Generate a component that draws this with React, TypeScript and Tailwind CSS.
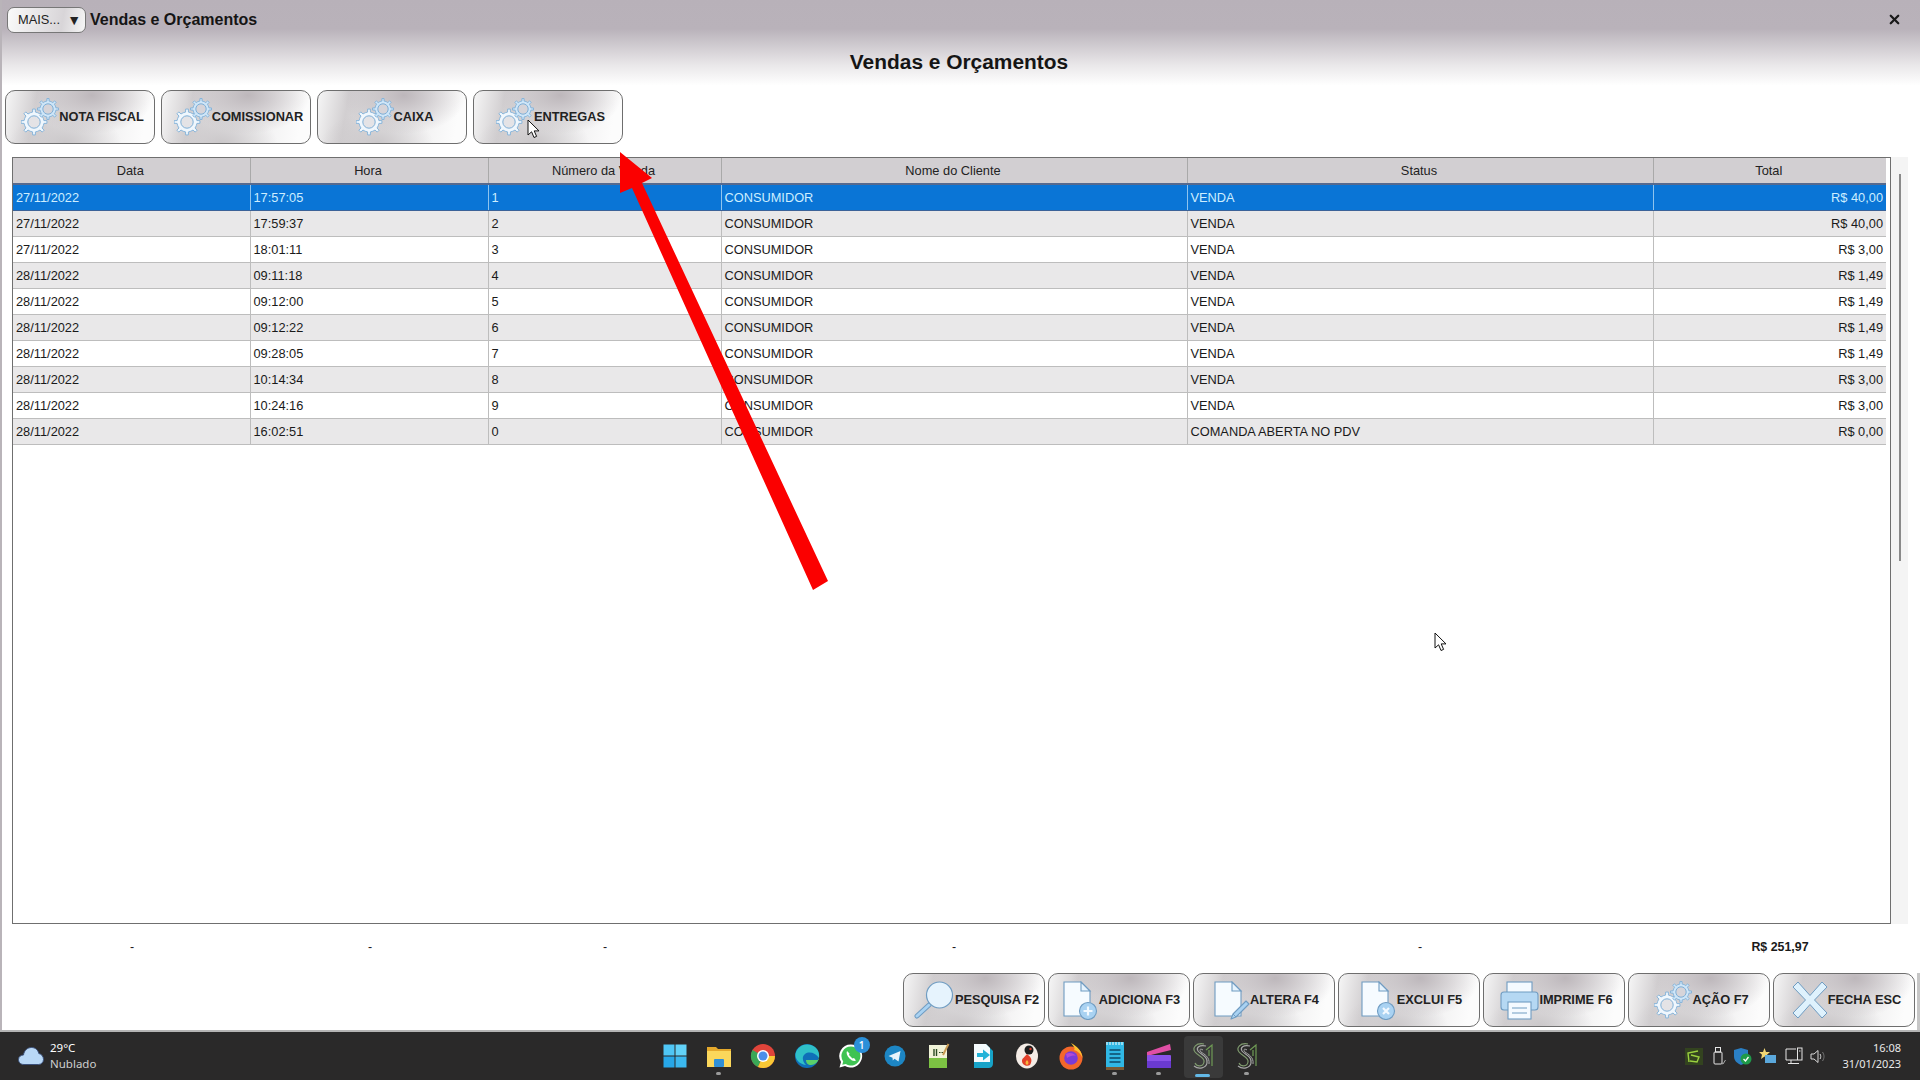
import type { ReactNode } from 'react'
import { X } from 'lucide-react'

const rows = [
  ['27/11/2022', '17:57:05', '1', 'CONSUMIDOR', 'VENDA', 'R$ 40,00'],
  ['27/11/2022', '17:59:37', '2', 'CONSUMIDOR', 'VENDA', 'R$ 40,00'],
  ['27/11/2022', '18:01:11', '3', 'CONSUMIDOR', 'VENDA', 'R$ 3,00'],
  ['28/11/2022', '09:11:18', '4', 'CONSUMIDOR', 'VENDA', 'R$ 1,49'],
  ['28/11/2022', '09:12:00', '5', 'CONSUMIDOR', 'VENDA', 'R$ 1,49'],
  ['28/11/2022', '09:12:22', '6', 'CONSUMIDOR', 'VENDA', 'R$ 1,49'],
  ['28/11/2022', '09:28:05', '7', 'CONSUMIDOR', 'VENDA', 'R$ 1,49'],
  ['28/11/2022', '10:14:34', '8', 'CONSUMIDOR', 'VENDA', 'R$ 3,00'],
  ['28/11/2022', '10:24:16', '9', 'CONSUMIDOR', 'VENDA', 'R$ 3,00'],
  ['28/11/2022', '16:02:51', '0', 'CONSUMIDOR', 'COMANDA ABERTA NO PDV', 'R$ 0,00'],
]

const columns = ['Data', 'Hora', 'Número da Venda', 'Nome do Cliente', 'Status', 'Total']
const colWidths = ['w-[237px]', 'w-[238px]', 'w-[233px]', 'w-[466px]', 'w-[466px]', 'w-[233px]']

const LINE = '#6f9cc2'
const PALE = '#e6f3fd'
const MID = '#a9d2f2'

// gear outline with square teeth
function gearPath(cx: number, cy: number, outer: number, root: number, teeth: number) {
  const pts: string[] = []
  for (let i = 0; i < teeth; i++) {
    const a = (i * 2 * Math.PI) / teeth
    const s = Math.PI / teeth
    const corners = [
      [a - s * 0.95, root],
      [a - s * 0.36, root],
      [a - s * 0.26, outer],
      [a + s * 0.26, outer],
      [a + s * 0.36, root],
      [a + s * 0.95, root],
    ]
    for (const [an, r] of corners) {
      pts.push(`${(cx + r * Math.sin(an)).toFixed(2)} ${(cy - r * Math.cos(an)).toFixed(2)}`)
    }
  }
  return `M${pts.join('L')}Z`
}

function GearsIcon() {
  return (
    <svg width="38" height="38" viewBox="0 0 38 38" className="shrink-0">
      <path d={gearPath(13, 24, 13, 10, 8)} fill="#f0f7fd" stroke="#7fb0d8" strokeWidth="0.9" strokeLinejoin="round" />
      <circle cx="13" cy="24" r="6.2" fill="#e4e3e6" stroke="#7fb0d8" strokeWidth="1" />
      <path d={gearPath(27, 11, 10.5, 8, 8)} fill="#cfe6f8" stroke="#7fb0d8" strokeWidth="0.9" strokeLinejoin="round" />
      <circle cx="27" cy="11" r="5.2" fill="#d6d4d9" stroke="#7fb0d8" strokeWidth="1" />
    </svg>
  )
}

function SearchIcon() {
  return (
    <svg width="41" height="39" viewBox="0 0 41 39" className="shrink-0">
      <path d="M15 24 L3 35" stroke={LINE} strokeWidth="5" strokeLinecap="round" />
      <path d="M15 24 L3 35" stroke="#a9d2f2" strokeWidth="3" strokeLinecap="round" />
      <circle cx="25.5" cy="14" r="13" fill={PALE} stroke={LINE} strokeWidth="1.2" />
    </svg>
  )
}

function DocBase({ children }: { children?: ReactNode }) {
  return (
    <svg width="36" height="39" viewBox="0 0 36 39" className="shrink-0">
      <path d="M1 1 H18 L27 10 V35 H1 Z" fill="#f6fbff" stroke={LINE} strokeWidth="1.1" />
      <path d="M18 1 V10 H27 Z" fill={PALE} stroke={LINE} strokeWidth="1.1" />
      {children}
    </svg>
  )
}

function AddDocIcon() {
  return (
    <DocBase>
      <circle cx="25" cy="30" r="8.5" fill={MID} stroke={LINE} strokeWidth="1.1" />
      <path d="M25 25.5 V34.5 M20.5 30 H29.5" stroke="#f2f9ff" strokeWidth="2.2" />
    </DocBase>
  )
}

function DelDocIcon() {
  return (
    <DocBase>
      <circle cx="25" cy="30" r="8.5" fill={MID} stroke={LINE} strokeWidth="1.1" />
      <path d="M22 27 L28 33 M28 27 L22 33" stroke="#f2f9ff" strokeWidth="2.2" />
    </DocBase>
  )
}

function EditDocIcon() {
  return (
    <DocBase>
      <path d="M32 20 L35 23 L22 36 L17 38 L19 33 Z" fill={MID} stroke={LINE} strokeWidth="1.1" strokeLinejoin="round" />
      <path d="M19 33 L22 36" stroke={LINE} strokeWidth="1" />
    </DocBase>
  )
}

function PrinterIcon() {
  return (
    <svg width="39" height="39" viewBox="0 0 39 39" className="shrink-0">
      <rect x="7" y="1" width="25" height="18" fill="#f4faff" stroke={LINE} strokeWidth="1.1" />
      <rect x="1" y="11" width="37" height="18" rx="3" fill="#b5d8f3" stroke={LINE} strokeWidth="1.1" />
      <rect x="8" y="21" width="23" height="17" fill="#f4faff" stroke={LINE} strokeWidth="1.1" />
      <path d="M12 27 H27 M12 32 H27" stroke={LINE} strokeWidth="1.1" />
    </svg>
  )
}

function CloseIcon() {
  return (
    <svg width="36" height="38" viewBox="0 0 36 38" className="shrink-0">
      <path
        d="M6 1 L18 14.5 L30 1 L35 6 L22.5 19 L35 32 L30 37 L18 23.5 L6 37 L1 32 L13.5 19 L1 6 Z"
        fill="#dff2fd"
        stroke={LINE}
        strokeWidth="1"
        strokeLinejoin="round"
      />
    </svg>
  )
}

function Cursor({ className }: { className: string }) {
  return (
    <svg width="13" height="20" viewBox="0 0 13 20" className={className}>
      <path d="M1 1 V16 L4.6 12.8 L7 18.5 L9.6 17.4 L7.2 11.9 L12 11.9 Z" fill="#fff" stroke="#111" strokeWidth="1" strokeLinejoin="round" />
    </svg>
  )
}

function ActionButton({ icon, label, wide }: { icon: ReactNode; label: string; wide?: boolean }) {
  return (
    <button
      type="button"
      className={`flex h-[54px] shrink-0 items-center justify-center rounded-[10px] border border-[#6e6e6e] bg-[radial-gradient(ellipse_42%_75%_at_58%_8%,#bdb7bb_0%,rgba(189,183,187,0)_100%),radial-gradient(ellipse_38%_60%_at_40%_100%,#cbc8ca_0%,rgba(203,200,202,0)_100%),linear-gradient(100deg,#f6f6f6_0%,#d2cfd1_20%,#ebeaeb_55%,#fcfcfc_92%)] pl-[5px] text-[12.8px] font-bold whitespace-nowrap text-[#222] ${wide ? 'w-[150px]' : 'w-[142px]'}`}
    >
      {icon}
      <span>{label}</span>
    </button>
  )
}

function SLogo() {
  return (
    <svg width="24" height="28" viewBox="0 0 24 28" fill="none" stroke="#7f9a6e" strokeWidth="1.2">
      <path d="M13 2 C5 0.5 1 6 4 10 C7 14 14 15 13 20 C12 25 6 25 4 21" />
      <path d="M15 4 C8 2.5 5 6 7 9 C10 13 17 14 16 21 C15 26 8 28 3 24" stroke="#a8a8a8" />
      <path d="M12 8 C9 6 8 8 10 10 C13 12 19 15 18 22" stroke="#a8a8a8" strokeWidth="1" />
      <path d="M15 8 L21 3 V24 M18 8 V14" stroke="#6f9a55" />
    </svg>
  )
}

const taskIcons: { key: string; icon: ReactNode; dot?: boolean; active?: boolean; badge?: string }[] = [
  {
    key: 'start',
    icon: (
      <svg width="24" height="24" viewBox="0 0 24 24">
        <rect x="0.5" y="0.5" width="11" height="11" fill="#4fc6f5" />
        <rect x="12.5" y="0.5" width="11" height="11" fill="#62d2f8" />
        <rect x="0.5" y="12.5" width="11" height="11" fill="#27a7e8" />
        <rect x="12.5" y="12.5" width="11" height="11" fill="#3bb8ef" />
      </svg>
    ),
  },
  {
    key: 'files',
    dot: true,
    icon: (
      <svg width="26" height="24" viewBox="0 0 26 24">
        <path d="M1 3 H10 L12 5 H25 V22 H1 Z" fill="#e5a92c" />
        <rect x="1" y="7" width="24" height="16" fill="#fbd75b" />
        <rect x="8" y="15" width="10" height="8" rx="1" fill="#2f8fd6" />
      </svg>
    ),
  },
  {
    key: 'chrome',
    icon: (
      <svg width="26" height="26" viewBox="0 0 26 26">
        <circle cx="13" cy="13" r="12" fill="#e0443a" />
        <path d="M13 13 L2.5 7 A12 12 0 0 0 8 24 Z" fill="#3aa757" />
        <path d="M13 13 L8 24 A12 12 0 0 0 25 13 Z" fill="#f9c935" />
        <circle cx="13" cy="13" r="6" fill="#fff" />
        <circle cx="13" cy="13" r="4.5" fill="#4a8fe8" />
      </svg>
    ),
  },
  {
    key: 'edge',
    icon: (
      <svg width="26" height="26" viewBox="0 0 26 26">
        <circle cx="13" cy="13" r="12" fill="#0f6fb8" />
        <path d="M1.5 11 C3 3 11 0 17 2 C23 4 26 9 25 15 C22 10 15 8 11 11 C8 13 8 18 12 22 C5 21 1 16 1.5 11 Z" fill="#2fc0c8" />
        <path d="M25 15 C24 19 21 22 17 22 C14 22 12 20 12 17 H25 Z" fill="#5bd06a" />
      </svg>
    ),
  },
  {
    key: 'whatsapp',
    badge: '1',
    icon: (
      <svg width="26" height="26" viewBox="0 0 26 26">
        <path d="M13 1.5 A11.5 11.5 0 1 1 7 23 L1.5 24.5 L3 19 A11.5 11.5 0 0 1 13 1.5 Z" fill="#fff" />
        <path d="M13 3.5 A9.5 9.5 0 1 1 7.8 21 L4.3 21.8 L5.2 18.4 A9.5 9.5 0 0 1 13 3.5 Z" fill="#3fc353" />
        <path d="M9 8 C8 10 9 13 11.5 15.5 C14 18 16.5 18.5 18 17.5 L16 15 L14.5 15.5 L11 12 L11.5 10.5 Z" fill="#fff" />
      </svg>
    ),
  },
  {
    key: 'telegram',
    icon: (
      <svg width="22" height="22" viewBox="0 0 22 22">
        <circle cx="11" cy="11" r="10.5" fill="#1d86c4" />
        <path d="M4.5 11 L16.5 6 L14.5 16.5 L10.5 13.8 L8.8 15.5 L8.5 12.8 Z" fill="#e8f4fb" />
      </svg>
    ),
  },
  {
    key: 'greendoc',
    icon: (
      <svg width="22" height="26" viewBox="0 0 22 26">
        <rect x="1" y="2" width="18" height="23" fill="#f1f3d8" />
        <rect x="1" y="15" width="18" height="10" fill="#7cc243" />
        <path d="M6 6 V13 M8.5 6 V13" stroke="#2c4a22" strokeWidth="1.4" />
        <path d="M11 9.5 H15" stroke="#2c4a22" strokeWidth="1" strokeDasharray="1.5 1" />
        <path d="M20.5 1 L15 12" stroke="#c89a52" strokeWidth="2" />
      </svg>
    ),
  },
  {
    key: 'bluearrow',
    icon: (
      <svg width="22" height="26" viewBox="0 0 22 26">
        <path d="M2 1 H14 L21 8 V20 C21 24 19 25 16 25 H2 Z" fill="#17a3c8" />
        <path d="M2 1 H14 L18 5 V19 H2 Z" fill="#f5fbfd" />
        <path d="M5 10 H11 V6.5 L18 12 L11 17.5 V14 H5 Z" fill="#22b3d8" />
      </svg>
    ),
  },
  {
    key: 'redapp',
    icon: (
      <svg width="24" height="26" viewBox="0 0 24 26">
        <ellipse cx="12" cy="13" rx="11" ry="12.5" fill="#f4ece6" />
        <path d="M12 11 C16 14 18 17 15 22 C12 24 7 22 7 18 C7 15 9 15 12 11 Z" fill="#e2402a" />
        <path d="M12 17 C14 19 14 21 12 22 C10 21 10 19 12 17 Z" fill="#f6b73c" />
        <circle cx="14" cy="7" r="4.5" fill="#1c1c1c" />
        <circle cx="15.5" cy="6" r="1.2" fill="#d83b2a" />
      </svg>
    ),
  },
  {
    key: 'firefox',
    icon: (
      <svg width="26" height="28" viewBox="0 0 26 28">
        <circle cx="13" cy="16" r="11.5" fill="#f4672a" />
        <path d="M13 1 C19 4 24 9 24.5 16 C23 12 20 9 16 8 C18 6 15 4 13 1 Z" fill="#fcc12f" />
        <circle cx="13" cy="16" r="6.8" fill="#7b3bd6" />
        <path d="M8 12 C11 10 16 11 18 14 C15 13 12 14 9 16 Z" fill="#b24bd6" />
      </svg>
    ),
  },
  {
    key: 'notes',
    dot: true,
    icon: (
      <svg width="20" height="30" viewBox="0 0 20 30">
        <rect x="1" y="1" width="18" height="25" fill="#30b7e4" />
        <path d="M2 1 V4 M5 1 V4 M8 1 V4 M11 1 V4 M14 1 V4 M17 1 V4" stroke="#d9f3fb" strokeWidth="1.2" />
        <path d="M4.5 9 H15.5 M4.5 13 H15.5 M4.5 17 H15.5 M4.5 21 H15.5" stroke="#0c4a68" strokeWidth="1.7" />
        <rect x="1" y="26" width="18" height="3" fill="#7a5a34" />
      </svg>
    ),
  },
  {
    key: 'clapper',
    dot: true,
    icon: (
      <svg width="26" height="26" viewBox="0 0 26 26">
        <path d="M1 9 L24 1 L25 7 L1 13 Z" fill="#e04fa5" />
        <rect x="1" y="12" width="24" height="13" rx="1" fill="#8a52e8" />
        <rect x="1" y="18" width="24" height="7" fill="#6a3ad0" />
      </svg>
    ),
  },
  { key: 's1', active: true, icon: <SLogo /> },
  { key: 's2', dot: true, icon: <SLogo /> },
]

function TaskIcon({ icon, dot, active, badge }: { icon: ReactNode; dot?: boolean; active?: boolean; badge?: string }) {
  return (
    <div className="relative flex h-[48px] w-[44px] items-center justify-center">
      {active && <div className="absolute top-[4px] left-[3px] h-[42px] w-[39px] rounded-[4px] bg-[#3a3a3a]" />}
      <div className="relative flex">{icon}</div>
      {badge && (
        <span className="absolute top-[5px] right-[3px] flex h-[16px] w-[16px] items-center justify-center rounded-full bg-[#2b8fd8] font-['Open_Sans',sans-serif] text-[10px] font-semibold text-white">
          {badge}
        </span>
      )}
      {dot && <div className="absolute bottom-[5px] h-[3px] w-[5px] rounded-full bg-[#9a9a9a]" />}
      {active && <div className="absolute bottom-[3px] h-[3px] w-[15px] rounded-full bg-[#63b8e6]" />}
    </div>
  )
}

function TrayIcons() {
  return (
    <div className="flex items-center gap-[7px] pr-[16px]">
      <svg width="18" height="17" viewBox="0 0 18 17" className="mr-[3px]">
        <rect width="18" height="17" fill="#33431f" />
        <path d="M4 14 L3 5 L13 3 M6 7 L14 9 L12 14 L5 13" fill="none" stroke="#9bd13f" strokeWidth="1.4" />
      </svg>
      <svg width="13" height="18" viewBox="0 0 13 18" fill="none" stroke="#e6e6e6" strokeWidth="1">
        <rect x="1" y="5" width="8" height="12" rx="1" />
        <rect x="2.5" y="0.5" width="5" height="4.5" />
        <path d="M8 16 L10 17 L12.5 13" stroke="#aaa" />
      </svg>
      <svg width="19" height="18" viewBox="0 0 19 18">
        <path d="M8 1 L15 3 V10 C15 14 11 17 8 18 C4 16 1 14 1 9 V3 Z" fill="#2a7fc4" />
        <circle cx="13" cy="12" r="5.5" fill="#1f9a4a" />
        <path d="M10.5 12 L12.5 14 L15.5 10" fill="none" stroke="#fff" strokeWidth="1.3" />
      </svg>
      <svg width="17" height="16" viewBox="0 0 17 16">
        <path d="M5.5 0 L7 4 L11 4 L8 6.8 L9 11 L5.5 8.6 L2 11 L3 6.8 L0 4 L4 4 Z" fill="#f0d674" />
        <rect x="6" y="7" width="11" height="8" fill="#5ba8dc" />
      </svg>
      <svg width="18" height="18" viewBox="0 0 18 18" fill="none" stroke="#e6e6e6" strokeWidth="1" className="ml-[2px]">
        <path d="M11 2 H1 V13 H12 M6 13 V16 M3 16.5 H14" />
        <rect x="12.5" y="1" width="4.5" height="12" />
        <path d="M14 4 H15.5" />
      </svg>
      <svg width="16" height="15" viewBox="0 0 16 15" fill="none" stroke="#d8d8d8" strokeWidth="1">
        <path d="M1 5 H4 L8 1.5 V13.5 L4 10 H1 Z" />
        <path d="M10 5 C11 6.5 11 8.5 10 10" />
        <path d="M12.5 3 C14.5 6 14.5 9 12.5 12" stroke="#777" />
      </svg>
    </div>
  )
}

export default function App() {
  return (
    <div className="relative flex h-[1080px] w-[1920px] flex-col overflow-hidden bg-white font-['Liberation_Sans',Arial,sans-serif] text-[#1a1a1a]">
      <div className="flex flex-1 flex-col border-l-2 border-[#b9b4b9]">
        {/* title band */}
        <div className="h-[90px] shrink-0 bg-[linear-gradient(180deg,#b8b1b9_0%,#b9b2ba_32%,#e9e7e9_72%,#ffffff_95%)]">
          <div className="flex h-[39px] items-center pr-[18px] pl-[5px]">
            <button
              type="button"
              className="flex h-[26px] w-[79px] items-center justify-between rounded-[7px] border border-[#777] bg-[linear-gradient(100deg,#fafafa,#d8d5d8_70%,#f6f6f6)] pr-[4px] pl-[10px] text-[12.8px] text-[#222]"
            >
              MAIS...
              <span className="text-[14px] leading-none">▼</span>
            </button>
            <span className="ml-[4px] text-[16px] font-bold text-[#151515]">Vendas e Orçamentos</span>
            <X size={15} strokeWidth={3.6} className="ml-auto text-[#1a1a1a]" />
          </div>
          <div className="pr-[4px] text-center text-[20.9px] leading-[46px] font-bold text-[#151515]">Vendas e Orçamentos</div>
        </div>

        {/* top buttons */}
        <div className="flex h-[67px] shrink-0 gap-[6px] pl-[3px]">
          <ActionButton wide icon={<GearsIcon />} label="NOTA FISCAL" />
          <ActionButton wide icon={<GearsIcon />} label="COMISSIONAR" />
          <ActionButton wide icon={<GearsIcon />} label="CAIXA" />
          <ActionButton wide icon={<GearsIcon />} label="ENTREGAS" />
        </div>

        {/* grid + scrollbar */}
        <div className="flex h-[767px] shrink-0 pl-[10px]">
          <div className="h-full w-[1879px] border border-[#6f6f6f] pr-[2px]">
            <table className="w-[1873px] table-fixed border-collapse text-[12.8px]">
              <thead>
                <tr className="h-[26px] bg-[#d2cfd2]">
                  {columns.map((c, i) => (
                    <th key={c} className={`${colWidths[i]} border-r border-b-2 border-r-[#a9a9a9] border-b-[#566a8f] pt-[1px] pr-[2px] font-normal text-[#222] last:border-r-0`}>
                      {c}
                    </th>
                  ))}
                </tr>
              </thead>
              <tbody>
                {rows.map((r, i) => (
                  <tr
                    key={i}
                    className={`h-[26px] ${i === 0 ? 'bg-[#0a75d6] text-[#cdeeff]' : i % 2 === 1 ? 'bg-[#e9e8e9]' : 'bg-white'}`}
                  >
                    {r.map((v, j) => (
                      <td
                        key={j}
                        className={`border-r border-b px-[3px] pt-[1px] whitespace-nowrap last:border-r-0 ${i === 0 ? 'border-r-[#8fc4ee] border-b-[#3b6298]' : 'border-r-[#bdbdbd] border-b-[#bdbdbd]'} ${j === 5 ? 'pr-[3px] text-right' : ''}`}
                      >
                        {v}
                      </td>
                    ))}
                  </tr>
                ))}
              </tbody>
            </table>
          </div>
          <div className="flex w-[17px] justify-center bg-[#f4f4f4] pt-[17px]">
            <div className="h-[387px] w-[2px] bg-[#8a8a8a]" />
          </div>
        </div>

        {/* totals */}
        <div className="flex h-[49px] shrink-0 pt-[14px] pl-[11px] text-[12.4px]">
          <div className="w-[238px] text-center">-</div>
          <div className="w-[238px] text-center">-</div>
          <div className="w-[232px] text-center">-</div>
          <div className="w-[466px] text-center">-</div>
          <div className="w-[466px] text-center">-</div>
          <div className="w-[234px] pl-[20px] text-center font-bold">R$ 251,97</div>
        </div>

        {/* bottom buttons */}
        <div className="flex h-[57px] shrink-0 justify-end gap-[3px] border-r-[3px] border-[#c6c6c6] pr-[2px]">
          <ActionButton icon={<SearchIcon />} label="PESQUISA F2" />
          <ActionButton icon={<AddDocIcon />} label="ADICIONA F3" />
          <ActionButton icon={<EditDocIcon />} label="ALTERA F4" />
          <ActionButton icon={<DelDocIcon />} label="EXCLUI F5" />
          <ActionButton icon={<PrinterIcon />} label="IMPRIME F6" />
          <ActionButton icon={<GearsIcon />} label="AÇÃO F7" />
          <ActionButton icon={<CloseIcon />} label="FECHA ESC" />
        </div>
      </div>

      {/* taskbar */}
      <div className="grid h-[50px] shrink-0 grid-cols-[1fr_auto_1fr] border-t-2 border-[#b4b4b4] bg-[#2a2929] font-['Noto_Sans',sans-serif] text-white">
        <div className="flex items-center pl-[18px]">
          <svg width="26" height="20" viewBox="0 0 26 20">
            <path d="M6 18.5 C2 18.5 0.5 16 0.5 13.5 C0.5 10.5 3 9 5.5 9 C6 4.5 9.5 1.5 13.5 1.5 C17.5 1.5 20 4 20.8 7.5 C23.5 8 25.5 10.5 25.5 13.5 C25.5 16.5 23 18.5 20.5 18.5 Z" fill="#b9d8f6" stroke="#3b4f78" strokeWidth="1" />
          </svg>
          <div className="ml-[6px] flex flex-col leading-[16px]">
            <span className="text-[11.5px]">29°C</span>
            <span className="text-[11.5px] text-[#cfcfcf]">Nublado</span>
          </div>
        </div>
        <div className="flex items-center pl-[1px]">
          {taskIcons.map((t) => (
            <TaskIcon key={t.key} icon={t.icon} dot={t.dot} active={t.active} badge={t.badge} />
          ))}
        </div>
        <div className="flex items-center justify-end pr-[19px]">
          <TrayIcons />
          <div className="flex flex-col items-end text-[11px] leading-[16px] text-[#e8e8e8]">
            <span>16:08</span>
            <span>31/01/2023</span>
          </div>
        </div>
      </div>

      {/* annotation and pointers over the page */}
      <svg width="1920" height="1080" viewBox="0 0 1920 1080" className="pointer-events-none absolute top-0 left-0">
        <polygon points="620,152 652,178 642,183 828,581 813,590 632,188 620,193" fill="#fb0000" />
      </svg>
      <Cursor className="pointer-events-none absolute top-[119px] left-[527px]" />
      <Cursor className="pointer-events-none absolute top-[632px] left-[1434px]" />
    </div>
  )
}
